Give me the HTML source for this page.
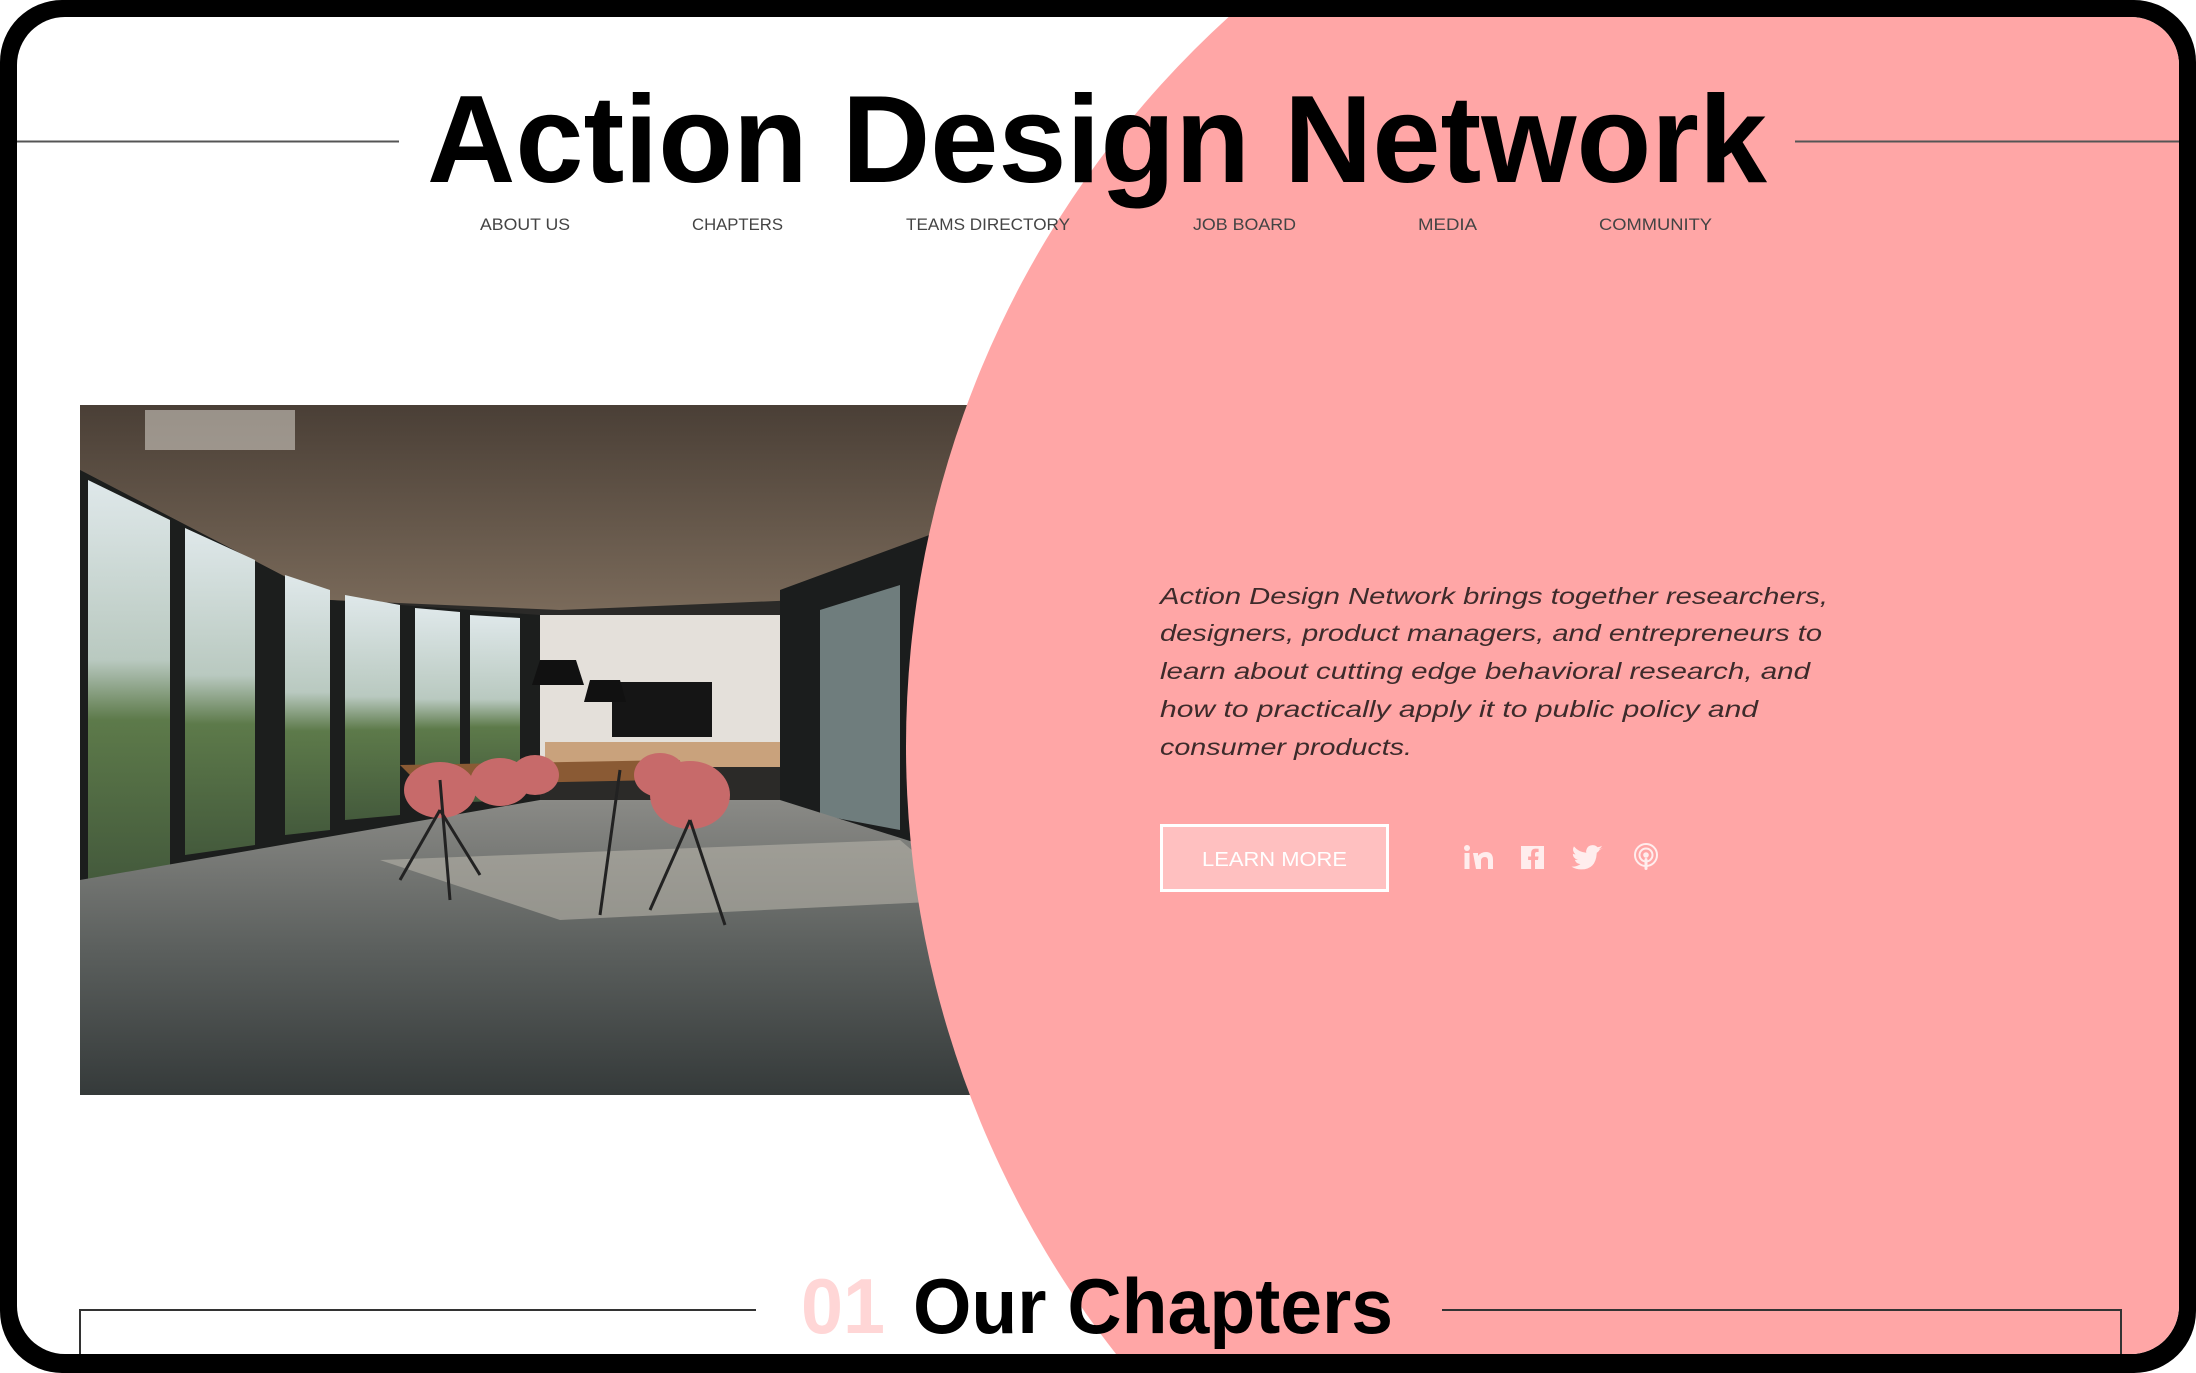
<!DOCTYPE html>
<html><head><meta charset="utf-8"><style>
html,body{margin:0;padding:0;width:2196px;height:1373px;background:#fff;overflow:hidden}
.frame{position:absolute;left:0;top:0;width:2196px;height:1373px;background:#000;border-radius:62px}
.inner{position:absolute;left:17px;top:17px;width:2162px;height:1337px;background:#fff;border-radius:48px;overflow:hidden}
svg{position:absolute;left:-17px;top:-17px}
</style></head><body>
<div class="frame"><div class="inner">
<svg width="2196" height="1373" viewBox="0 0 2196 1373" xmlns="http://www.w3.org/2000/svg">
<defs>
<linearGradient id="ceil" x1="0" y1="0" x2="0" y2="1"><stop offset="0" stop-color="#4a3f36"/><stop offset="1" stop-color="#7a6a5a"/></linearGradient>
<linearGradient id="floor" x1="0" y1="0" x2="0" y2="1"><stop offset="0" stop-color="#8a8a86"/><stop offset="0.5" stop-color="#5c605e"/><stop offset="1" stop-color="#353a3a"/></linearGradient>
<linearGradient id="win" x1="0" y1="0" x2="0" y2="1"><stop offset="0" stop-color="#dfe8ea"/><stop offset="0.45" stop-color="#b9c9c0"/><stop offset="0.6" stop-color="#5d7a4a"/><stop offset="1" stop-color="#445a3c"/></linearGradient>
</defs>
<!-- photo -->
<g>
<rect x="80" y="405" width="890" height="690" fill="#2b2a28"/>
<polygon points="80,405 970,405 970,540 800,600 560,610 330,600 80,470" fill="url(#ceil)"/>
<polygon points="80,470 330,600 540,615 540,840 80,880" fill="#1c1e1d"/>
<polygon points="88,480 170,520 170,870 88,880" fill="url(#win)"/>
<polygon points="185,528 255,560 255,845 185,855" fill="url(#win)"/>
<polygon points="285,575 330,590 330,830 285,835" fill="url(#win)"/>
<polygon points="345,595 400,605 400,815 345,820" fill="url(#win)"/>
<polygon points="415,608 460,612 460,805 415,810" fill="url(#win)"/>
<polygon points="470,615 520,618 520,800 470,802" fill="url(#win)"/>
<rect x="540" y="615" width="240" height="150" fill="#e4e0da"/>
<rect x="612" y="682" width="100" height="55" fill="#151515"/>
<rect x="545" y="742" width="235" height="25" fill="#c9a27c"/>
<polygon points="780,590 970,520 970,860 780,815" fill="#1b1d1d"/>
<polygon points="820,610 900,585 900,830 820,815" fill="#6f7d7d"/>
<polygon points="80,880 540,800 780,800 970,860 970,1095 80,1095" fill="url(#floor)"/>
<polygon points="380,860 900,840 970,900 560,920" fill="#b6b2a8" opacity="0.6"/>
<polygon points="400,765 680,760 660,780 420,785" fill="#8a5a34"/>
<g fill="#c76a6a">
<ellipse cx="440" cy="790" rx="36" ry="28"/><ellipse cx="500" cy="782" rx="30" ry="24"/><ellipse cx="535" cy="775" rx="24" ry="20"/>
<ellipse cx="690" cy="795" rx="40" ry="34"/><ellipse cx="660" cy="775" rx="26" ry="22"/>
</g>
<g stroke="#222" stroke-width="3"><line x1="440" y1="810" x2="400" y2="880"/><line x1="440" y1="810" x2="480" y2="875"/><line x1="690" y1="820" x2="650" y2="910"/><line x1="690" y1="820" x2="725" y2="925"/><line x1="620" y1="770" x2="600" y2="915"/><line x1="440" y1="780" x2="450" y2="900"/></g>
<path d="M540 660 h36 l8 25 h-52z" fill="#111"/><path d="M590 680 h30 l6 22 h-42z" fill="#111"/>
<rect x="145" y="410" width="150" height="40" fill="#cfcac2" opacity="0.6"/>
</g>
<!-- pink circle -->
<circle cx="1891" cy="746" r="985" fill="#FFA6A6"/>
<!-- header lines -->
<line x1="0" y1="141.5" x2="399" y2="141.5" stroke="#555" stroke-width="2"/>
<line x1="1795" y1="141.5" x2="2196" y2="141.5" stroke="#555" stroke-width="2"/>
<text x="427" y="182" textLength="1340" lengthAdjust="spacingAndGlyphs" font-family="Liberation Sans, sans-serif" font-weight="bold" font-size="124" fill="#000">Action Design Network</text>
<g font-family="Liberation Sans, sans-serif" font-size="17" fill="#444">
<text x="480" y="230" textLength="90" lengthAdjust="spacingAndGlyphs">ABOUT US</text>
<text x="692" y="230" textLength="91" lengthAdjust="spacingAndGlyphs">CHAPTERS</text>
<text x="906" y="230" textLength="164" lengthAdjust="spacingAndGlyphs">TEAMS DIRECTORY</text>
<text x="1193" y="230" textLength="103" lengthAdjust="spacingAndGlyphs">JOB BOARD</text>
<text x="1418" y="230" textLength="59" lengthAdjust="spacingAndGlyphs">MEDIA</text>
<text x="1599" y="230" textLength="113" lengthAdjust="spacingAndGlyphs">COMMUNITY</text>
</g>
<g font-family="Liberation Sans, sans-serif" font-style="italic" font-size="23" fill="#3d2b2b">
<text x="1160" y="604" textLength="668" lengthAdjust="spacingAndGlyphs">Action Design Network brings together researchers,</text>
<text x="1160" y="641" textLength="662" lengthAdjust="spacingAndGlyphs">designers, product managers, and entrepreneurs to</text>
<text x="1160" y="679" textLength="650" lengthAdjust="spacingAndGlyphs">learn about cutting edge behavioral research, and</text>
<text x="1160" y="717" textLength="598" lengthAdjust="spacingAndGlyphs">how to practically apply it to public policy and</text>
<text x="1160" y="755" textLength="252" lengthAdjust="spacingAndGlyphs">consumer products.</text>
</g>
<rect x="1161.5" y="825.5" width="226" height="65" fill="#FFC0C0" stroke="#fff" stroke-width="3"/>
<text x="1202" y="866" textLength="145" lengthAdjust="spacingAndGlyphs" font-family="Liberation Sans, sans-serif" font-size="20" fill="#fff">LEARN MORE</text>
<g fill="#FFEDED">
<circle cx="1467" cy="848" r="3"/><rect x="1464.5" y="853" width="5" height="16"/>
<path d="M1473 853 h5 v3 q3-4 8-4 q7 0 7 8 v9 h-5 v-8 q0-4-3-4 q-4 0-4 4 v8 h-5z"/>
<path d="M1521 846 h23 v23 h-9 v-9 h3 l.5-3.5 h-3.5 v-2.5 q0-2 2-2 h1.6 v-3.2 q-1.5-.2-3-.2 q-4.5 0-4.5 4.5 v3.4 h-3 v3.5 h3 v9 h-10z"/>
<path d="M1603 848 q-2 1-4 1.2 q2-1.3 3-3.5 q-2 1.2-4.4 1.6 q-2-2.2-5-2.2 q-5 0-6.3 5 q-.4 1.4 0 2.6 q-7.5-.4-12.4-6.3 q-2.4 4.4 1.6 8 q-1.5 0-2.7-.7 q.1 4.7 5 6 q-1.6.4-3 .1 q1.2 4 5.6 4.3 q-4 3-9 2.5 q4.5 2.8 9.7 2.8 q14.5 0 15.6-15.7 v-.8 q2-1.4 3-3.2z"/>
</g>
<g fill="none" stroke="#FFEDED" stroke-width="2"><circle cx="1646" cy="855" r="11"/><circle cx="1646" cy="855" r="6.5"/></g>
<circle cx="1646" cy="855" r="2.8" fill="#FFEDED"/><rect x="1644.5" y="858" width="3" height="12" rx="1.5" fill="#FFEDED"/>
<!-- chapters -->
<polyline points="80,1373 80,1310 756,1310" fill="none" stroke="#333" stroke-width="2"/>
<polyline points="1442,1310 2121,1310 2121,1373" fill="none" stroke="#333" stroke-width="2"/>
<text x="801" y="1333" textLength="84" lengthAdjust="spacingAndGlyphs" font-family="Liberation Sans, sans-serif" font-weight="bold" font-size="78" fill="#FFD6D6">01</text>
<text x="913" y="1333" textLength="480" lengthAdjust="spacingAndGlyphs" font-family="Liberation Sans, sans-serif" font-weight="bold" font-size="78" fill="#000">Our Chapters</text>
</svg>
</div></div>
</body></html>
